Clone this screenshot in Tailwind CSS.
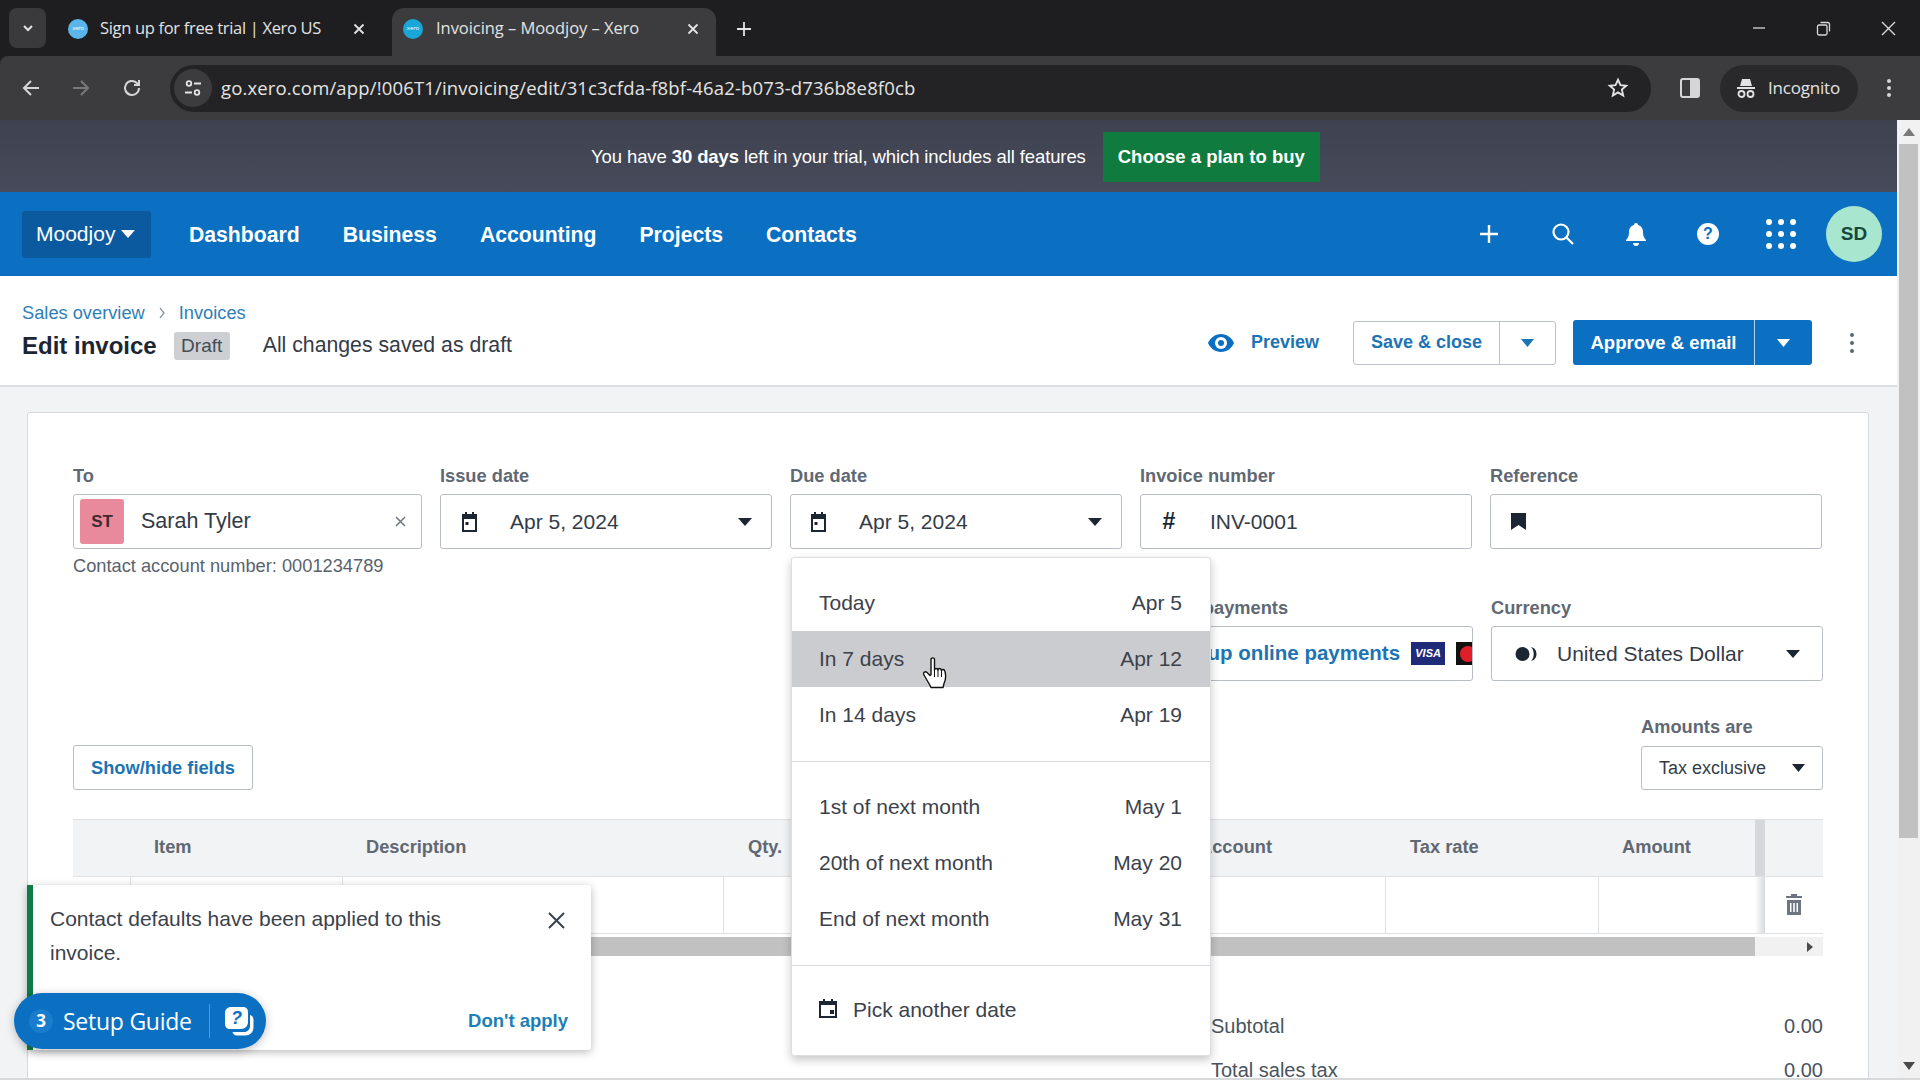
<!DOCTYPE html>
<html lang="en">
<head>
<meta charset="utf-8">
<title>Invoicing – Moodjoy – Xero</title>
<script src="https://cdn.jsdelivr.net/npm/@tailwindcss/browser@4"></script>
</head>
<body class="m-0 bg-[#1e1e20]">
<div class="relative w-[1920px] h-[1080px] overflow-hidden flex flex-col font-['Liberation_Sans',Arial,sans-serif] text-[#2c3440]">

  <!-- Tab strip -->
  <div class="h-14 shrink-0 bg-[#1e1e20] flex items-end pl-[9px] font-['Open_Sans',sans-serif] text-[#e3e3e3]">
    <div class="w-[37px] h-10 mb-2 rounded-lg bg-[#3a3a3c] flex items-center justify-center">
      <svg class="w-[14px] h-[14px]" viewBox="0 0 14 14" fill="none" stroke="#e3e3e3" stroke-width="2"><path d="M3 5l4 4 4-4"/></svg>
    </div>
    <div class="w-[346px] h-12 flex items-center pl-[22px] pb-[7px] text-[16.500px] tracking-[-0.32px]">
      <span class="w-5 h-5 rounded-full bg-[#5bb5ea] flex items-center justify-center text-[6px] text-white shrink-0">xero</span>
      <span class="ml-[12px] w-[253px] whitespace-nowrap">Sign up for free trial | Xero US</span>
      <svg class="w-3 h-3" viewBox="0 0 12 12" stroke="#e3e3e3" stroke-width="1.8"><path d="M1.5 1.5l9 9M10.500 1.500l-9 9"/></svg>
    </div>
    <div class="w-[324px] h-12 rounded-t-xl bg-[#3c3c3e] flex items-center pl-[11px] pb-[7px] text-[16.500px] tracking-[-0.05px]">
      <span class="w-5 h-5 rounded-full bg-[#19a7d8] flex items-center justify-center text-[6px] text-white shrink-0">xero</span>
      <span class="ml-[13px] w-[251px] whitespace-nowrap">Invoicing – Moodjoy – Xero</span>
      <svg class="w-3 h-3" viewBox="0 0 12 12" stroke="#e3e3e3" stroke-width="1.8"><path d="M1.5 1.5l9 9M10.500 1.500l-9 9"/></svg>
    </div>
    <div class="w-14 h-12 flex items-center justify-center pb-[7px]">
      <svg class="w-4 h-4" viewBox="0 0 16 16" stroke="#e3e3e3" stroke-width="1.800"><path d="M8 1v14M1 8h14"/></svg>
    </div>
    <div class="ml-auto h-14 flex items-center pr-[24px] gap-[50px] pb-0">
      <svg class="w-[14px] h-[14px]" viewBox="0 0 14 14" stroke="#d8d8d8" stroke-width="1.300"><path d="M1 7h12"/></svg>
      <svg class="w-[15px] h-[15px]" viewBox="0 0 15 15" fill="none" stroke="#d8d8d8" stroke-width="1.300"><rect x="1.500" y="4" width="9.500" height="10" rx="1.500"/><path d="M4.500 1.500h7a2 2 0 0 1 2 2v7"/></svg>
      <svg class="w-[15px] h-[15px]" viewBox="0 0 15 15" stroke="#d8d8d8" stroke-width="1.400"><path d="M1 1l13 13M14 1L1 14"/></svg>
    </div>
  </div>

  <!-- Toolbar -->
  <div class="h-16 shrink-0 bg-[#3c3c3e] rounded-tl-lg flex items-center pl-[21px] pr-[20px] font-['Open_Sans',sans-serif] text-[#e3e3e3]">
    <svg class="w-[20px] h-[20px]" viewBox="0 0 20 20" fill="none" stroke="#d6d6d6" stroke-width="2"><path d="M18 10H3M10 3l-7 7 7 7"/></svg>
    <svg class="w-[20px] h-[20px] ml-[30px]" viewBox="0 0 20 20" fill="none" stroke="#77787a" stroke-width="2"><path d="M2 10h15M10 3l7 7-7 7"/></svg>
    <svg class="w-[22px] h-[22px] ml-[30px]" viewBox="0 0 22 22" fill="none" stroke="#d6d6d6" stroke-width="2"><path d="M18 11a7 7 0 1 1-2.200-5.100L18 8M18 3v5h-5"/></svg>
    <div class="ml-[27px] w-[1481px] h-[47px] rounded-full bg-[#232325] flex items-center pl-1">
      <div class="w-[38px] h-[38px] rounded-full bg-[#3c3c3e] flex items-center justify-center">
        <svg class="w-[20px] h-[20px]" viewBox="0 0 20 20" fill="none" stroke="#e3e3e3" stroke-width="1.800"><circle cx="6" cy="5.500" r="2.300"/><path d="M11 5.500h7M2 14.500h7"/><circle cx="14" cy="14.500" r="2.300"/></svg>
      </div>
      <span class="ml-[9px] text-[18.500px] tracking-[0.15px] whitespace-nowrap">go.xero.com/app/!006T1/invoicing/edit/31c3cfda-f8bf-46a2-b073-d736b8e8f0cb</span>
      <svg class="w-[22px] h-[22px] ml-auto mr-[22px]" viewBox="0 0 24 24" fill="none" stroke="#e3e3e3" stroke-width="2"><path d="M12 3l2.700 6 6.300.6-4.800 4.200 1.500 6.400L12 16.800l-5.700 3.400 1.500-6.400L3 9.600 9.300 9z"/></svg>
    </div>
    <svg class="w-[20px] h-[20px] ml-[29px]" viewBox="0 0 20 20"><rect x="1" y="1" width="18" height="18" rx="2" fill="none" stroke="#d6d6d6" stroke-width="2"/><rect x="10" y="1" width="9" height="18" fill="#d6d6d6"/></svg>
    <div class="ml-[20px] w-[138px] h-[47px] rounded-full bg-[#29292b] flex items-center pl-[16px] text-[17px] tracking-[-0.200px]">
      <svg class="w-[20px] h-[22px]" viewBox="0 0 20 22" fill="#e3e3e3"><path d="M6 2h8l2 7H4z"/><rect x="1" y="10" width="18" height="2"/><circle cx="5.500" cy="17" r="3" fill="none" stroke="#e3e3e3" stroke-width="1.800"/><circle cx="14.500" cy="17" r="3" fill="none" stroke="#e3e3e3" stroke-width="1.800"/></svg>
      <span class="ml-[12px]">Incognito</span>
    </div>
    <div class="ml-[29px] flex flex-col gap-[3px]">
      <span class="w-1 h-1 rounded-full bg-[#d6d6d6]"></span><span class="w-1 h-1 rounded-full bg-[#d6d6d6]"></span><span class="w-1 h-1 rounded-full bg-[#d6d6d6]"></span>
    </div>
  </div>

  <!-- Page + scrollbar -->
  <div class="flex-1 min-h-0 flex bg-[#f2f3f4]">
    <div class="w-[1897px] shrink-0 min-h-0 overflow-hidden flex flex-col">
      <!-- Trial banner -->
      <div class="h-[72px] shrink-0 bg-gradient-to-b from-[#3f4250] to-[#464a5a] flex items-center pl-[591px] pt-[1px] text-white text-[18.500px]">
        <span class="whitespace-nowrap tracking-[-0.100px]">You have <b>30 days</b> left in your trial, which includes all features</span>
        <span class="ml-[17px] w-[217px] h-[50px] bg-[#0f7b3e] flex items-center justify-center font-bold text-[18.500px] whitespace-nowrap">Choose a plan to buy</span>
      </div>
      <!-- Nav -->
      <div class="h-[84px] shrink-0 bg-[#0b70c2] flex items-center pl-[22px] text-white">
        <div class="w-[129px] h-[47px] rounded-[3px] bg-[#0b5aa0] flex items-center pl-[14px] text-[21px]">Moodjoy
          <svg class="w-[14px] h-[8px] ml-[6px]" viewBox="0 0 14 8" fill="#fff"><path d="M0 0h14L7 8z"/></svg>
        </div>
        <div class="ml-[38px] pt-[1px] flex gap-[43px] font-bold text-[21.200px]">
          <span>Dashboard</span><span>Business</span><span>Accounting</span><span>Projects</span><span>Contacts</span>
        </div>
        <div class="ml-auto flex items-center pr-[15px]">
          <svg class="w-5 h-5" viewBox="0 0 20 20" stroke="#fff" stroke-width="2.400"><path d="M10 1v18M1 10h18"/></svg>
          <svg class="w-[24px] h-[24px] ml-[52px]" viewBox="0 0 24 24" fill="none" stroke="#fff" stroke-width="2.200"><circle cx="10" cy="10" r="7.500"/><path d="M15.500 15.500l6.500 6.500"/></svg>
          <svg class="w-[22px] h-[24px] ml-[50px]" viewBox="0 0 22 24" fill="#fff"><path d="M11 1c1.200 0 2 .8 2 2 3.500 1 5 4 5 7 0 4 1 6 3 8v1H1v-1c2-2 3-4 3-8 0-3 1.500-6 5-7 0-1.200.8-2 2-2z"/><path d="M8 21h6a3 3 0 0 1-6 0z"/></svg>
          <span class="ml-[50px] w-[22px] h-[22px] rounded-full bg-white text-[#0b70c2] flex items-center justify-center font-bold text-[16px]">?</span>
          <div class="ml-[47px] grid grid-cols-3 gap-[6px]">
            <span class="w-[6px] h-[6px] rounded-full bg-white"></span><span class="w-[6px] h-[6px] rounded-full bg-white"></span><span class="w-[6px] h-[6px] rounded-full bg-white"></span>
            <span class="w-[6px] h-[6px] rounded-full bg-white"></span><span class="w-[6px] h-[6px] rounded-full bg-white"></span><span class="w-[6px] h-[6px] rounded-full bg-white"></span>
            <span class="w-[6px] h-[6px] rounded-full bg-white"></span><span class="w-[6px] h-[6px] rounded-full bg-white"></span><span class="w-[6px] h-[6px] rounded-full bg-white"></span>
          </div>
          <span class="ml-[30px] w-[56px] h-[56px] rounded-full bg-[#a8e6cf] text-[#14493a] flex items-center justify-center font-bold text-[19px]">SD</span>
        </div>
      </div>
      <!-- Page header -->
      <div class="h-[111px] shrink-0 bg-white border-b-2 border-[#dcdfe2] flex items-start pl-[22px] pr-[43px]">
        <div class="flex flex-col pt-[27px]">
          <div class="flex items-center h-5 text-[18.250px] text-[#2f7fb5]">
            <span>Sales overview</span>
            <svg class="w-2 h-3 mx-[13px]" viewBox="0 0 8 12" fill="none" stroke="#8a97a3" stroke-width="1.300"><path d="M2 1l4 5-4 5"/></svg>
            <span>Invoices</span>
          </div>
          <div class="flex items-center mt-[6px] h-[34px]">
            <span class="font-bold text-[24px] text-[#1c2633]">Edit invoice</span>
            <span class="ml-[17px] w-[56px] h-[28px] rounded-[3px] bg-[#cdcfd2] flex items-center justify-center text-[19px] text-[#414b56]">Draft</span>
            <span class="ml-[33px] text-[21.250px] text-[#333b47]">All changes saved as draft</span>
          </div>
        </div>
        <div class="ml-auto flex items-center pt-[44px]">
          <svg class="w-[26px] h-[18px]" viewBox="0 0 26 18"><path d="M13 0c6 0 11 4 13 9-2 5-7 9-13 9S2 14 0 9c2-5 7-9 13-9z" fill="#0a6fc2"/><circle cx="13" cy="9" r="6" fill="#fff"/><circle cx="13" cy="9" r="3" fill="#0a6fc2"/></svg>
          <span class="ml-[17px] text-[#1d74b4] text-[18px] font-bold w-[102px]">Preview</span>
          <div class="h-[44px] w-[203px] rounded-[3px] border border-[#bcc2c8] bg-white flex items-center text-[#1d74b4] font-bold text-[18px]">
            <span class="w-[146px] h-full flex items-center justify-center border-r border-[#bcc2c8] whitespace-nowrap">Save &amp; close</span>
            <svg class="w-[13px] h-2 ml-[21px]" viewBox="0 0 13 8" fill="#1d74b4"><path d="M0 0h13L6.500 8z"/></svg>
          </div>
          <div class="ml-[17px] h-[45px] w-[239px] rounded-[3px] bg-[#0b70c2] flex items-center text-white font-bold text-[18.500px]">
            <span class="w-[182px] h-full flex items-center justify-center border-r border-white/70 whitespace-nowrap">Approve &amp; email</span>
            <svg class="w-[13px] h-2 ml-[22px]" viewBox="0 0 13 8" fill="#fff"><path d="M0 0h13L6.500 8z"/></svg>
          </div>
          <div class="ml-[38px] flex flex-col gap-[4px]">
            <span class="w-1 h-1 rounded-full bg-[#5a6570]"></span><span class="w-1 h-1 rounded-full bg-[#5a6570]"></span><span class="w-1 h-1 rounded-full bg-[#5a6570]"></span>
          </div>
        </div>
      </div>
      <!-- Invoice card -->
      <div class="flex-1 min-h-0 pl-[27px] pr-[28px] pt-[25px]">
        <div class="h-[700px] rounded-t-[3px] bg-white border border-[#d5d8dc] pl-[45px] pr-[45px] pt-[53px] flex flex-col">
          <!-- Row 1 -->
          <div class="flex gap-[18px] items-start">
            <div class="w-[349px]">
              <div class="h-5 font-bold text-[18.250px] text-[#5f6873] leading-5">To</div>
              <div class="mt-2 h-[55px] rounded-[3px] border border-[#b8bdc3] flex items-center pl-[6px] pr-[15px]">
                <span class="w-[44px] h-[45px] rounded-[3px] bg-[#e98a9c] flex items-center justify-center text-[17px] font-bold text-[#3d2a30]">ST</span>
                <span class="ml-[17px] text-[21.500px] text-[#333b47]">Sarah Tyler</span>
                <svg class="w-[11px] h-[11px] ml-auto" viewBox="0 0 11 11" stroke="#6d7680" stroke-width="1.500"><path d="M1 1l9 9M10 1l-9 9"/></svg>
              </div>
              <div class="mt-[5px] h-6 leading-6 text-[18.250px] text-[#59626d] whitespace-nowrap">Contact account number: 0001234789</div>
            </div>
            <div class="w-[332px]">
              <div class="h-5 font-bold text-[18.250px] text-[#5f6873] leading-5">Issue date</div>
              <div class="mt-2 h-[55px] rounded-[3px] border border-[#b8bdc3] flex items-center pl-[19px] pr-[19px]">
                <svg class="w-[19px] h-[20px]" viewBox="0 0 19 20"><path d="M3 4h13v15H3z" fill="none" stroke="#1c2633" stroke-width="2"/><rect x="2" y="2" width="15" height="5" fill="#1c2633"/><rect x="5" y="0" width="2" height="3" fill="#1c2633"/><rect x="12" y="0" width="2" height="3" fill="#1c2633"/><rect x="5.500" y="10" width="3" height="3" fill="#1c2633"/></svg>
                <span class="ml-[31px] text-[21px] text-[#333b47]">Apr 5, 2024</span>
                <svg class="w-[14px] h-2 ml-auto" viewBox="0 0 14 8" fill="#1c2633"><path d="M0 0h14L7 8z"/></svg>
              </div>
            </div>
            <div class="w-[332px]">
              <div class="h-5 font-bold text-[18.250px] text-[#5f6873] leading-5">Due date</div>
              <div class="mt-2 h-[55px] rounded-[3px] border border-[#b8bdc3] flex items-center pl-[18px] pr-[19px]">
                <svg class="w-[19px] h-[20px]" viewBox="0 0 19 20"><path d="M3 4h13v15H3z" fill="none" stroke="#1c2633" stroke-width="2"/><rect x="2" y="2" width="15" height="5" fill="#1c2633"/><rect x="5" y="0" width="2" height="3" fill="#1c2633"/><rect x="12" y="0" width="2" height="3" fill="#1c2633"/><rect x="5.500" y="10" width="3" height="3" fill="#1c2633"/></svg>
                <span class="ml-[31px] text-[21px] text-[#333b47]">Apr 5, 2024</span>
                <svg class="w-[14px] h-2 ml-auto" viewBox="0 0 14 8" fill="#1c2633"><path d="M0 0h14L7 8z"/></svg>
              </div>
            </div>
            <div class="w-[332px]">
              <div class="h-5 font-bold text-[18.250px] text-[#5f6873] leading-5">Invoice number</div>
              <div class="mt-2 h-[55px] rounded-[3px] border border-[#b8bdc3] flex items-center pl-[18px]">
                <span class="w-[20px] text-[23px] font-bold text-[#1c2633] text-center">#</span>
                <span class="ml-[31px] text-[21px] text-[#333b47]">INV-0001</span>
              </div>
            </div>
            <div class="w-[332px]">
              <div class="h-5 font-bold text-[18.250px] text-[#5f6873] leading-5">Reference</div>
              <div class="mt-2 h-[55px] rounded-[3px] border border-[#b8bdc3] flex items-center pl-[20px]">
                <svg class="w-[15px] h-[17px]" viewBox="0 0 15 17" fill="#1c2633"><path d="M0 0h15v17l-7.500-5L0 17z"/></svg>
              </div>
            </div>
          </div>
          <!-- Row 2 -->
          <div class="flex justify-end gap-[18px] mt-[20px]">
            <div class="w-[332px]">
              <div class="h-5 font-bold text-[18.250px] text-[#5f6873] leading-5">Online payments</div>
              <div class="mt-[8px] h-[55px] rounded-[3px] border border-[#b8bdc3] flex items-center pl-[28px] overflow-hidden">
                <span class="font-bold text-[20.500px] text-[#1d74b4] whitespace-nowrap">Set up online payments</span>
                <span class="ml-[11px] w-[34px] h-[23px] shrink-0 bg-[#1f2a78] text-white text-[11px] font-bold italic flex items-center justify-center">VISA</span>
                <span class="ml-[11px] w-[34px] h-[23px] shrink-0 bg-[#111] flex items-center pl-[4px]"><span class="w-4 h-4 rounded-full bg-[#e01e2a]"></span></span>
              </div>
            </div>
            <div class="w-[332px]">
              <div class="h-5 font-bold text-[18.250px] text-[#5f6873] leading-5">Currency</div>
              <div class="mt-[8px] h-[55px] rounded-[3px] border border-[#b8bdc3] flex items-center pl-[23px] pr-[22px]">
                <svg class="w-[22px] h-4" viewBox="0 0 22 16" fill="#1c2633"><circle cx="7.500" cy="8" r="7"/><path d="M16 1c4 1 5.500 4 5.500 7s-1.500 6-5.500 7c2-2 2.700-4.500 2.700-7S18 3 16 1z"/></svg>
                <span class="ml-[20px] text-[21px] text-[#333b47]">United States Dollar</span>
                <svg class="w-[14px] h-2 ml-auto" viewBox="0 0 14 8" fill="#1c2633"><path d="M0 0h14L7 8z"/></svg>
              </div>
            </div>
          </div>
          <!-- Row 3 -->
          <div class="flex justify-between items-end mt-[36px]">
            <div class="w-[180px] h-[45px] rounded-[3px] border border-[#b8bdc3] flex items-center justify-center text-[#1d74b4] font-bold text-[18.250px]">Show/hide fields</div>
            <div class="w-[182px]">
              <div class="h-5 font-bold text-[18.250px] text-[#5f6873] leading-5">Amounts are</div>
              <div class="mt-[9px] h-[44px] rounded-[3px] border border-[#b8bdc3] flex items-center pl-[17px] pr-[17px] text-[18px] text-[#333b47]">
                <span>Tax exclusive</span>
                <svg class="w-[13px] h-2 ml-auto" viewBox="0 0 13 8" fill="#1c2633"><path d="M0 0h13L6.500 8z"/></svg>
              </div>
            </div>
          </div>
          <!-- Table -->
          <div class="mt-[29px]">
            <div class="h-[58px] flex bg-[#f2f3f5] border-y border-[#dfe2e5] text-[18.250px] font-bold text-[#5f6873] items-center">
              <span class="w-[58px]"></span>
              <span class="w-[212px] pl-[23px] pb-[2px]">Item</span>
              <span class="w-[381px] pl-[23px] pb-[2px]">Description</span>
              <span class="w-[452px] pl-[24px] pb-[2px]">Qty.</span>
              <span class="w-[210px] pl-[23px] pb-[2px]">Account</span>
              <span class="w-[213px] pl-[24px] pb-[2px]">Tax rate</span>
              <span class="w-[156px] pl-[23px] pb-[2px]">Amount</span>
              <span class="w-[10px] h-full bg-[#d6d8db]"></span>
              <span class="w-[58px]"></span>
            </div>
            <div class="h-[57px] flex border-b border-[#dfe2e5]">
              <span class="w-[58px] border-r border-[#dfe2e5]"></span>
              <span class="w-[212px] border-r border-[#dfe2e5]"></span>
              <span class="w-[381px] border-r border-[#dfe2e5]"></span>
              <span class="w-[452px]"></span>
              <span class="w-[210px] border-r border-[#dfe2e5]"></span>
              <span class="w-[213px] border-r border-[#dfe2e5]"></span>
              <span class="w-[156px]"></span>
              <span class="w-[10px] bg-gradient-to-r from-white to-[#d6d8db]"></span>
              <span class="w-[58px] flex items-center justify-center pb-[2px]">
                <svg class="w-[16px] h-[21px]" viewBox="0 0 16 21" fill="#6d7680"><path d="M5 0h6v2h5v2H0V2h5z"/><path fill-rule="evenodd" d="M1 6h14v15H1zM4 9v9h1.500V9zm3.200 0v9h1.600V9zm3.300 0v9H12V9z"/></svg>
              </span>
            </div>
            <div class="mt-[3px] h-[19px] bg-[#f1f1f1] flex items-center">
              <span class="w-[1682px] h-full bg-[#c1c1c1]"></span>
              <svg class="w-[6px] h-[10px] ml-[52px]" viewBox="0 0 6 10" fill="#4a4a4a"><path d="M0 0l6 5-6 5z"/></svg>
            </div>
          </div>
          <!-- Totals -->
          <div class="w-[612px] self-end mt-[56px] text-[20px] text-[#4a535e]">
            <div class="flex justify-between h-7 items-center"><span>Subtotal</span><span>0.00</span></div>
            <div class="flex justify-between h-7 items-center mt-[16px]"><span>Total sales tax</span><span>0.00</span></div>
          </div>
        </div>
      </div>
    </div>
    <!-- Page scrollbar -->
    <div class="w-[23px] shrink-0 bg-[#f1f1f1] flex flex-col items-center pt-[8px] pb-[8px]">
      <svg class="w-[12px] h-[8px]" viewBox="0 0 12 8" fill="#7a7a7a"><path d="M6 0l6 8H0z"/></svg>
      <div class="mt-[8px] w-[19px] h-[694px] bg-[#c1c1c1]"></div>
      <svg class="w-[12px] h-[8px] mt-auto" viewBox="0 0 12 8" fill="#4a4a4a"><path d="M0 0h12L6 8z"/></svg>
    </div>
  </div>
  <div class="h-[2px] shrink-0 bg-[#d8d9da]"></div>

  <!-- Due date dropdown -->
  <div class="absolute left-[791px] top-[557px] w-[420px] h-[499px] bg-white rounded-[3px] border border-[#dcdee1] shadow-[0_4px_10px_rgba(0,0,0,0.22)] text-[21px] text-[#3c424b]">
    <div class="pt-[17px] pb-[18px]">
      <div class="h-[56px] pl-[27px] pr-[28px] flex justify-between items-center"><span>Today</span><span>Apr 5</span></div>
      <div class="h-[56px] pl-[27px] pr-[28px] flex justify-between items-center bg-[#cbcccf]"><span>In 7 days</span><span>Apr 12</span></div>
      <div class="h-[56px] pl-[27px] pr-[28px] flex justify-between items-center"><span>In 14 days</span><span>Apr 19</span></div>
    </div>
    <div class="pt-[17px] pb-[18px] border-t border-[#d8dadd]">
      <div class="h-[56px] pl-[27px] pr-[28px] flex justify-between items-center"><span>1st of next month</span><span>May 1</span></div>
      <div class="h-[56px] pl-[27px] pr-[28px] flex justify-between items-center"><span>20th of next month</span><span>May 20</span></div>
      <div class="h-[56px] pl-[27px] pr-[28px] flex justify-between items-center"><span>End of next month</span><span>May 31</span></div>
    </div>
    <div class="pt-[16px] pb-[18px] border-t border-[#d8dadd]">
      <div class="h-[56px] pl-[27px] pr-[28px] flex items-center">
        <svg class="w-[18px] h-[19px] -mt-[4px]" viewBox="0 0 18 19"><path d="M1 3h16v15H1z" fill="none" stroke="#1c2633" stroke-width="2"/><rect x="1" y="2" width="16" height="4" fill="#1c2633"/><rect x="4" y="0" width="2" height="3" fill="#1c2633"/><rect x="12" y="0" width="2" height="3" fill="#1c2633"/><rect x="11" y="11" width="4" height="4" fill="#1c2633"/></svg>
        <span class="ml-[16px]">Pick another date</span>
      </div>
    </div>
  </div>

  <!-- Hand cursor -->
  <svg class="absolute left-[923px] top-[657px] w-[25px] h-[34px]" viewBox="0 0 25 34"><path d="M8 2c1-1.500 3-1.500 3.500 0V13c0-2 3-2 3.500 0 0-2 3-2 3.500.5 .5-1.500 3-1.500 3.500 1 1 4 .5 9-1 12l-1 4H8l-1.500-3L1 18c-1.500-2 1-4.500 3-2.500l3 3 1-1z" fill="#fff" stroke="#111" stroke-width="1.400" stroke-linejoin="round"/><path d="M11.500 13v7M15 13v7M18.500 14v6" stroke="#111" stroke-width="1"/></svg>

  <!-- Toast -->
  <div class="absolute left-[27px] top-[885px] w-[564px] h-[165px] bg-white rounded-r-[3px] border-l-[6px] border-[#0f7b45] shadow-[0_2px_8px_rgba(0,0,0,0.28)] pl-[17px] pr-[22px]">
    <div class="flex justify-between items-start pt-[17px] text-[21px] leading-[34px] text-[#3c424b]">
      <p class="w-[430px]">Contact defaults have been applied to this invoice.</p>
      <svg class="w-[17px] h-[17px] mt-[10px] mr-[4px]" viewBox="0 0 17 17" stroke="#3c424b" stroke-width="2"><path d="M1 1l15 15M16 1L1 16"/></svg>
    </div>
    <div class="absolute right-[23px] top-[122px] text-[#1d7fb5] font-bold text-[18.500px]">Don't apply</div>
  </div>

  <!-- Setup guide -->
  <div class="absolute left-[14px] top-[993px] w-[252px] h-[56px] rounded-full bg-[#0b70c2] shadow-[0_2px_10px_rgba(0,0,0,0.25)] flex items-center pl-[15px] text-white">
    <span class="w-[24px] h-[24px] rounded-full bg-[#1a7ccc] flex items-center justify-center font-bold text-[17px] font-['Open_Sans',sans-serif]">3</span>
    <span class="ml-[10px] text-[23px] font-medium w-[146px] whitespace-nowrap font-['Open_Sans',sans-serif] tracking-[-0.25px]">Setup Guide</span>
    <span class="h-[34px] border-l border-white/30"></span>
    <svg class="ml-[14px] w-[30px] h-[30px]" viewBox="0 0 30 30" fill="none"><path d="M26 9c2 .5 3.500 2 3.500 4.500V21c0 5-3.500 8.500-8.500 8.500h-8c-2.500 0-4-1.500-4.500-3.500H20c3.500 0 6-2.500 6-6z" fill="#fff"/><path d="M7 1h12c3 0 5 2 5 5v10c0 4-3 7-7 7H6c-3 0-5-2-5-5V7c0-3.500 2.500-6 6-6z" fill="#fff"/><text x="12.500" y="18" text-anchor="middle" font-size="18" font-weight="700" font-style="italic" fill="#0b70c2" font-family="Liberation Sans">?</text></svg>
  </div>
</div>
</body>
</html>
